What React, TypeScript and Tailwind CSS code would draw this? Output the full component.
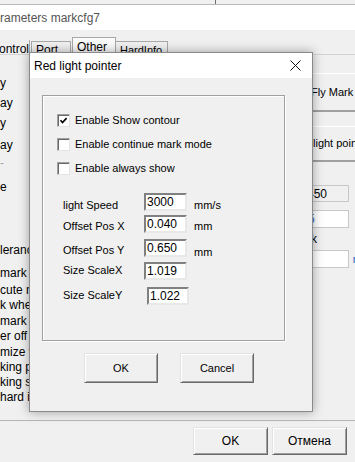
import React from 'react';

const leftRows = [
  { t: 'y', c: 'mt-[20px]' },
  { t: 'ay', c: 'mt-[4px]' },
  { t: 'y', c: 'mt-[4px]' },
  { t: 'ay', c: 'mt-[6px]' },
  { t: '-', c: 'mt-[2px] text-[#a8a8a8]' },
  { t: 'e', c: 'mt-[8px]' },
  { t: 'lerance', c: 'mt-[47px]' },
  { t: 'mark data', c: 'mt-[7px]' },
  { t: 'cute mode', c: 'mt-[1px]' },
  { t: 'k when', c: '-mt-[1px]' },
  { t: 'mark count', c: 'mt-0' },
  { t: 'er off when', c: '-mt-[1px]' },
  { t: 'mize window', c: 'mt-0' },
  { t: 'king para', c: '-mt-[1px]' },
  { t: 'king state', c: '-mt-[1px]' },
  { t: 'hard info', c: '-mt-[1px]' },
];

const raised =
  'border border-t-[#e3e3e3] border-l-[#e3e3e3] border-r-[#696969] border-b-[#696969] shadow-[inset_1px_1px_0_#ffffff,inset_-1px_-1px_0_#a0a0a0] bg-[#f0f0f0]';

const sunken =
  'border-2 border-t-[#808080] border-l-[#808080] border-r-[#e8e8e8] border-b-[#e8e8e8] bg-white';

const Check = ({ checked, label }: { checked?: boolean; label: string }) => (
  <div className="flex items-center h-[13px]">
    <span className="w-[13px] h-[13px] bg-white border border-t-[#a0a0a0] border-l-[#a0a0a0] border-r-[#e3e3e3] border-b-[#e3e3e3] shadow-[inset_1px_1px_0_#696969] flex items-center justify-center">
      {checked && (
        <svg width="9" height="9" viewBox="0 0 9 9">
          <polyline points="1.5,4.3 3.5,6.5 7.6,2.2" fill="none" stroke="#000" strokeWidth="1.7" />
        </svg>
      )}
    </span>
    <span className="ml-[5px] text-[11px] leading-[13px] text-black">{label}</span>
  </div>
);

interface FieldProps {
  label: string;
  value: string;
  unit?: string;
  rowc: string;
  lblc: string;
  inpc?: string;
  unitc?: string;
}

const Field = ({ label, value, unit, rowc, lblc, inpc = 'w-[43px]', unitc = 'mt-[3px]' }: FieldProps) => (
  <div className={'flex items-start h-[18px] ' + rowc}>
    <span className={'w-[81px] text-[11px] leading-[18px] shrink-0 ' + lblc}>{label}</span>
    <span className={'h-[18px] text-[12px] leading-[14px] pl-[1px] shrink-0 ' + sunken + ' ' + inpc}>{value}</span>
    {unit && <span className={'ml-[7px] text-[11px] leading-[18px] ' + unitc}>{unit}</span>}
  </div>
);

export default function App() {
  return (
    <div className="relative w-[355px] h-[462px] overflow-hidden bg-[#f0f0f0] font-['Liberation_Sans',Arial,sans-serif] text-black flex flex-col">
      {/* background window */}
      <div className="h-[5px] shrink-0 border-b border-[#b9b9b9] flex">
        <span className="ml-[215px] w-px h-full bg-[#707070]" />
      </div>
      <div className="h-[25px] shrink-0 bg-white flex items-center text-[12px] text-[#555]">rameters markcfg7</div>

      <div className="h-[25px] shrink-0 flex items-end text-[12px] border-b border-[#d4d4d4] whitespace-nowrap">
        <div className="w-[30px] h-[14px] border-r border-[#a8a8a8] flex justify-end leading-[18px]">ontrol</div>
        <div className="ml-[1px] w-[40px] h-[13px] border border-b-0 border-[#a8a8a8] pl-[4px] leading-[17px]">Port</div>
        <div className="ml-[1px] w-[44px] h-[17px] border border-b-0 border-[#a8a8a8] bg-[#fafafa] pl-[4px] leading-[18px]">Other</div>
        <div className="w-[52px] h-[13px] border border-b-0 border-l-0 border-[#a8a8a8] pl-[4px] leading-[17px] text-[11px]">HardInfo</div>
      </div>

      <div className="flex-1 flex">
        <div className="w-[120px] flex flex-col text-[12px] whitespace-nowrap">
          {leftRows.map((r, i) => (
            <div key={i} className={'h-[16px] leading-[16px] ' + r.c}>{r.t}</div>
          ))}
        </div>
        <div className="flex-1" />
        <div className="w-[100px] -mr-[7px] flex flex-col text-[11px] whitespace-nowrap">
          <div className="mt-[18px] h-[39px] border-t border-[#fff] border-b-2 border-b-[#a0a0a0] flex items-center pl-[49px]">Fly Mark</div>
          <div className="mt-[14px] h-[36px] border-t border-[#fff] border-b-2 border-b-[#a0a0a0] flex items-center pl-[51px] overflow-hidden">light poin</div>
          <div className="mt-[23px] w-[87px] h-[17px] border border-[#c8c8c8] bg-[#f0f0f0] flex items-center pl-[44px] text-[12px]">450</div>
          <div className="mt-[8px] w-[87px] h-[18px] border border-[#c8c8c8] bg-white flex items-center pl-[45px] text-[12px] text-[#2a5cc4]">5</div>
          <div className="mt-[3px] h-[16px] leading-[16px] pl-[49px] text-[12px]">k</div>
          <div className="flex items-center mt-[3px]">
            <div className="w-[87px] h-[18px] border border-[#c8c8c8] bg-white" />
            <span className="ml-[4px] text-[#2a5cc4] text-[11px]">m</span>
          </div>
        </div>
      </div>

      <div className="h-[42px] shrink-0 border-t border-[#b5b5b5] flex items-start pt-[6px] pl-[193px] gap-[4px] text-[12px]">
        <div className={'w-[75px] h-[28px] flex items-center justify-center ' + raised}>OK</div>
        <div className={'w-[75px] h-[28px] flex items-center justify-center ' + raised}>Отмена</div>
      </div>

      {/* Red light pointer dialog */}
      <div className="absolute left-[29px] top-[52px] w-[284px] h-[360px] border border-[#8a8a8a] bg-[#f0f0f0] shadow-[0_0_10px_rgba(0,0,0,0.35)] flex flex-col">
        <div className="h-[25px] shrink-0 bg-white flex items-center justify-between pl-[4px] pr-[11px] text-[12px]">
          <span>Red light pointer</span>
          <svg width="11" height="11" viewBox="0 0 11 11">
            <path d="M0.5 0.5 L10.5 10.5 M10.5 0.5 L0.5 10.5" stroke="#111" strokeWidth="1" />
          </svg>
        </div>

        <div className="ml-[12px] mt-[17px] w-[243px] h-[246px] shrink-0 border border-[#a0a0a0] shadow-[inset_1px_1px_0_#ffffff,1px_1px_0_#ffffff] pt-[18px] pl-[14px] flex flex-col">
          <div className="flex flex-col gap-[11px]">
            <Check checked label="Enable Show contour" />
            <Check label="Enable continue mark mode" />
            <Check label="Enable always show" />
          </div>
          <div className="mt-[18px] ml-[6px] flex flex-col">
            <Field label="light Speed" value="3000" unit="mm/s" rowc="" lblc="mt-[3px]" unitc="mt-[3px]" />
            <Field label="Offset Pos X" value="0.040" unit="mm" rowc="mt-[4px]" lblc="mt-[2px]" unitc="mt-[2px]" />
            <Field label="Offset Pos Y" value="0.650" unit="mm" rowc="mt-[6px]" lblc="mt-[2px]" unitc="mt-[4px]" />
            <Field label="Size ScaleX" value="1.019" rowc="mt-[5px]" lblc="-mt-[1px]" />
            <Field label="Size ScaleY" value="1.022" rowc="mt-[7px]" lblc="-mt-[1px]" inpc="ml-[3px] w-[42px]" />
          </div>
        </div>

        <div className="mt-[12px] pl-[54px] flex gap-[22px] text-[11px]">
          <div className={'w-[74px] h-[30px] flex items-center justify-center ' + raised}>OK</div>
          <div className={'w-[74px] h-[30px] flex items-center justify-center ' + raised}>Cancel</div>
        </div>
      </div>
    </div>
  );
}
